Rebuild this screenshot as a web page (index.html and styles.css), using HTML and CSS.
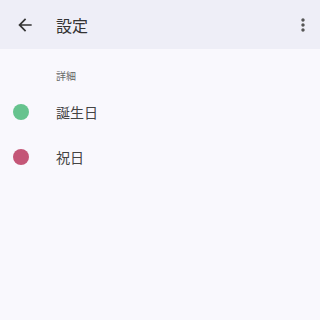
FILE: index.html
```html
<!DOCTYPE html>
<html lang="ja">
<head>
    <meta charset="utf-8">
    <meta name="viewport" content="width=device-width, initial-scale=1.0">
    <title>設定</title>
    <link rel="stylesheet" href="styles.css">
</head>
<body>
    <div class="app-bar">
        <button class="icon-button back">
            <svg viewBox="0 0 24 24" width="20" height="20"><path d="M20 11H7.83l5.59-5.59L12 4l-8 8 8 8 1.41-1.41L7.83 13H20v-2z" fill="#333"/></svg>
        </button>
        <h1>設定</h1>
        <button class="icon-button more">
            <svg viewBox="0 0 24 24" width="20" height="20"><path d="M12 8c1.1 0 2-.9 2-2s-.9-2-2-2-2 .9-2 2 .9 2 2 2zm0 2c-1.1 0-2 .9-2 2s.9 2 2 2 2-.9 2-2-.9-2-2-2zm0 6c-1.1 0-2 .9-2 2s.9 2 2 2 2-.9 2-2-.9-2-2-2z" fill="#555"/></svg>
        </button>
    </div>
    <div class="content">
        <div class="section-title">詳細</div>
        <div class="list-item">
            <span class="dot green"></span>
            <span class="label">誕生日</span>
        </div>
        <div class="list-item">
            <span class="dot red"></span>
            <span class="label">祝日</span>
        </div>
    </div>
</body>
</html>
```
FILE: styles.css
```css
body {
    font-family: "Noto Sans CJK JP", "Noto Sans", sans-serif;
    margin: 0;
    background-color: #f9f8fd;
    color: #444;
}
.app-bar {
    height: 49px;
    display: flex;
    align-items: center;
    background-color: #eeeef7;
}
.icon-button {
    background: none;
    border: none;
    padding: 0;
    width: 40px;
    height: 40px;
    display: flex;
    align-items: center;
    justify-content: center;
}
.back { margin-left: 5px; }
.more { margin-left: auto; margin-right: -3px; }
h1 {
    margin: 0 0 0 11px;
    font-size: 16px;
    font-weight: normal;
    color: #333;
}
.content {
    padding-top: 20px;
}
.section-title {
    margin-left: 56px;
    font-size: 10px;
    line-height: 14px;
    color: #666;
    margin-bottom: 6px;
}
.list-item {
    height: 45px;
    display: flex;
    align-items: center;
}
.dot {
    width: 16px;
    height: 16px;
    border-radius: 50%;
    margin-left: 13px;
    margin-right: 27px;
}
.green { background-color: #66c38e; }
.red { background-color: #c45677; }
.label {
    font-size: 14px;
    color: #444;
}
```
